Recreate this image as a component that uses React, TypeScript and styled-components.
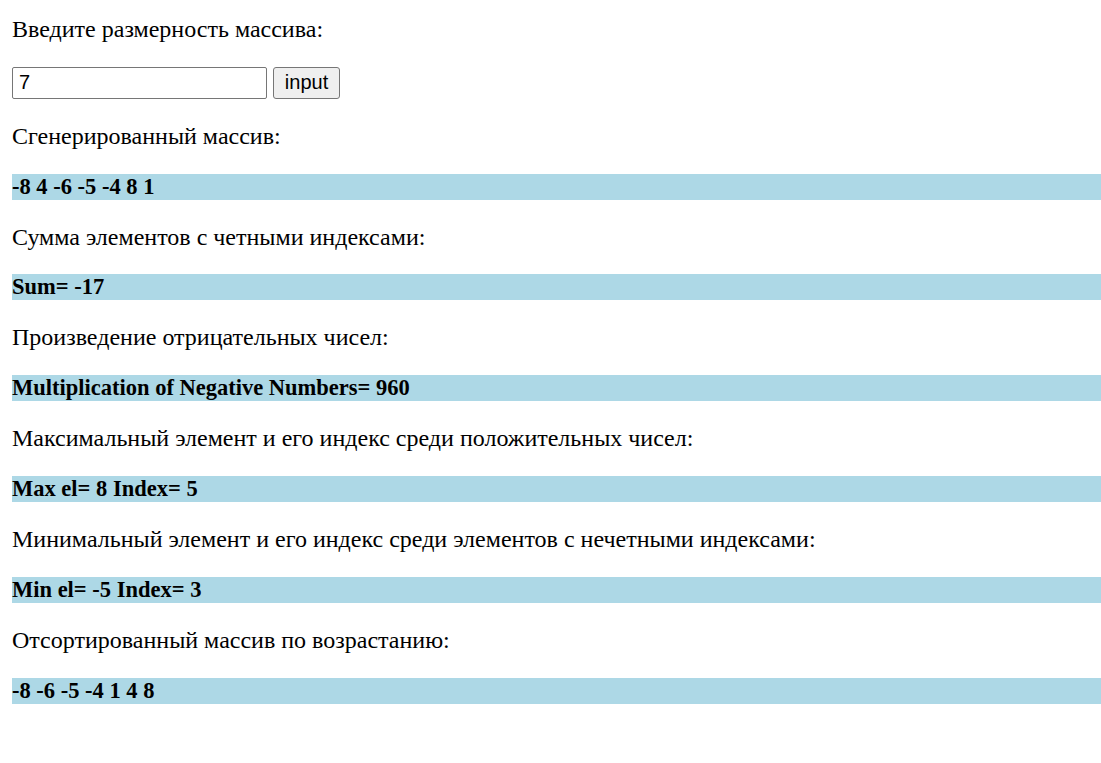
import React, { useState } from 'react';
import styled, { createGlobalStyle } from 'styled-components';

const GlobalStyle = createGlobalStyle`
  html, body {
    margin: 0;
    padding: 0;
    background: #fff;
  }
  body {
    font-family: 'Liberation Serif', 'Times New Roman', serif;
    color: #000;
  }
`;

interface Section {
  title: string;
  result: string;
}

const sections: Section[] = [
  { title: 'Сгенерированный массив:', result: '-8 4 -6 -5 -4 8 1' },
  { title: 'Сумма элементов с четными индексами:', result: 'Sum= -17' },
  { title: 'Произведение отрицательных чисел:', result: 'Multiplication of Negative Numbers= 960' },
  { title: 'Максимальный элемент и его индекс среди положительных чисел:', result: 'Max el= 8 Index= 5' },
  {
    title: 'Минимальный элемент и его индекс среди элементов с нечетными индексами:',
    result: 'Min el= -5 Index= 3',
  },
  { title: 'Отсортированный массив по возрастанию:', result: '-8 -6 -5 -4 1 4 8' },
];

const App = () => {
  const [size, setSize] = useState('7');

  return (
    <Page>
      <GlobalStyle />
      <Label>Введите размерность массива:</Label>
      <InputRow>
        <SizeInput value={size} onChange={(e) => setSize(e.target.value)} />
        <SubmitButton type="button">input</SubmitButton>
      </InputRow>
      {sections.map((s) => (
        <React.Fragment key={s.title}>
          <Label>{s.title}</Label>
          <Result>{s.result}</Result>
        </React.Fragment>
      ))}
    </Page>
  );
};

const Page = styled.main`
  display: flex;
  flex-direction: column;
  gap: 24px;
  padding: 16px 0 40px 12px;
`;

const Label = styled.p`
  margin: 0;
  font-size: 24px;
  line-height: 26.8px;
  white-space: nowrap;
`;

const InputRow = styled.div`
  display: flex;
  align-items: center;
  gap: 6px;
  height: 32px;
`;

const SizeInput = styled.input`
  box-sizing: border-box;
  width: 255px;
  height: 32px;
  margin: 0;
  padding: 0 6px;
  border: 1px solid #767676;
  border-radius: 2px;
  font-family: 'Liberation Sans', Arial, sans-serif;
  font-size: 20px;
  color: #000;
  background: #fff;
  outline: none;
`;

const SubmitButton = styled.button`
  box-sizing: border-box;
  width: 67px;
  height: 32px;
  margin: 0;
  padding: 0 9px;
  border: 1px solid #767676;
  border-radius: 3px;
  background: #efefef;
  font-family: 'Liberation Sans', Arial, sans-serif;
  font-size: 20px;
  color: #000;
  cursor: pointer;
`;

const Result = styled.p`
  margin: 0;
  height: 26px;
  font-size: 22.5px;
  line-height: 26px;
  font-weight: bold;
  background-color: lightblue;
  white-space: nowrap;
`;

export default App;
